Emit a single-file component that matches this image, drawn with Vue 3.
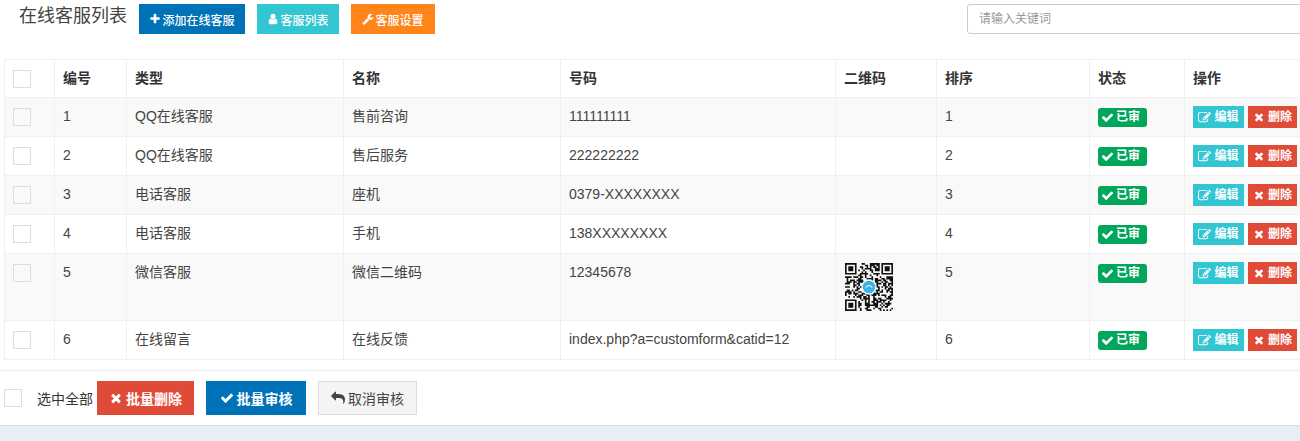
<script setup>
const icons = {
  check: 'M1671 566q0 40-28 68l-724 724-136 136q-28 28-68 28t-68-28l-136-136-362-362q-28-28-28-68t28-68l136-136q28-28 68-28t68 28l294 295 656-657q28-28 68-28t68 28l136 136q28 28 28 68z',
  times: 'M1490 1322q0 40-28 68l-136 136q-28 28-68 28t-68-28l-294-294-294 294q-28 28-68 28t-68-28l-136-136q-28-28-28-68t28-68l294-294-294-294q-28-28-28-68t28-68l136-136q28-28 68-28t68 28l294 294 294-294q28-28 68-28t68 28l136 136q28 28 28 68t-28 68l-294 294 294 294q28 28 28 68z',
  plus: 'M1600 736v192q0 40-28 68t-68 28h-416v416q0 40-28 68t-68 28h-192q-40 0-68-28t-28-68v-416h-416q-40 0-68-28t-28-68v-192q0-40 28-68t68-28h416v-416q0-40 28-68t68-28h192q40 0 68 28t28 68v416h416q40 0 68 28t28 68z',
  user: 'M1536 1399q0 109-62.5 187t-150.5 78h-854q-88 0-150.5-78t-62.5-187q0-85 8.5-160.5t31.5-152 58.5-131 94-89 134.5-34.5q131 128 313 128t313-128q76 0 134.5 34.5t94 89 58.5 131 31.5 152 8.5 160.5zm-256-887q0 159-112.5 271.5t-271.5 112.5-271.5-112.5-112.5-271.5 112.5-271.5 271.5-112.5 271.5 112.5 112.5 271.5z',
  wrench: 'M448 1472q0-26-19-45t-45-19-45 19-19 45 19 45 45 19 45-19 19-45zm644-420l-682 682q-37 37-90 37-52 0-91-37l-106-108q-38-36-38-90 0-53 38-91l681-681q39 98 114.5 173.5t173.5 114.5zm634-435q0 39-23 106-47 134-164.5 217.5t-258.5 83.5q-185 0-316.5-131.5t-131.5-316.5 131.5-316.5 316.5-131.5q58 0 121.5 16.5t107.5 46.5q16 11 16 28t-16 28l-293 169v224l193 107q5-3 79-48.5t135.5-81 70.5-35.5q15 0 23.5 10t8.5 25z',
  edit: 'M888 1184l116-116-152-152-116 116v56h96v96h56zm440-720q-16-16-33 1l-350 350q-17 17-1 33t33-1l350-350q17-17 1-33zm80 594v190q0 119-84.5 203.5t-203.5 84.5h-832q-119 0-203.5-84.5t-84.5-203.5v-832q0-119 84.5-203.5t203.5-84.5h832q63 0 117 25 15 7 18 23 3 17-9 29l-49 49q-14 14-32 8-23-6-45-6h-832q-66 0-113 47t-47 113v832q0 66 47 113t113 47h832q66 0 113-47t47-113v-126q0-13 9-22l64-64q15-15 35-7t20 29zm-96-738l288 288-672 672h-288v-288zm444 132l-92 92-288-288 92-92q28-28 68-28t68 28l152 152q28 28 28 68t-28 68z',
  reply: 'M1792 1120q0 166-127 451-3 7-10.5 24t-13.5 30-13 22q-12 17-28 17-15 0-23.5-10t-8.5-25q0-9 2.5-26.5t2.5-23.5q5-68 5-123 0-101-17.5-181t-48.5-138.5-80-101-105.5-69.5-133-42.5-154-21.5-175.5-6h-224v256q0 26-19 45t-45 19-45-19l-512-512q-19-19-19-45t19-45l512-512q19-19 45-19t45 19 19 45v256h224q713 0 875 403 53 134 53 333z'
}

const rows = [
  { id: 1, type: 'QQ在线客服', name: '售前咨询', num: '111111111', qr: false },
  { id: 2, type: 'QQ在线客服', name: '售后服务', num: '222222222', qr: false },
  { id: 3, type: '电话客服', name: '座机', num: '0379-XXXXXXXX', qr: false },
  { id: 4, type: '电话客服', name: '手机', num: '138XXXXXXXX', qr: false },
  { id: 5, type: '微信客服', name: '微信二维码', num: '12345678', qr: true },
  { id: 6, type: '在线留言', name: '在线反馈', num: 'index.php?a=customform&catid=12', qr: false }
]

const N = 29
function buildQr() {
  let seed = 20771
  const rand = () => {
    seed = (seed * 16807) % 2147483647
    return seed / 2147483647
  }
  let d = ''
  const cell = (x, y) => { d += `M${x} ${y}h1v1h-1z` }
  const inFinder = (x, y, ox, oy) => x >= ox - 1 && x <= ox + 7 && y >= oy - 1 && y <= oy + 7
  const finders = [[0, 0], [N - 7, 0], [0, N - 7]]
  for (let y = 0; y < N; y++) {
    for (let x = 0; x < N; x++) {
      if (finders.some(([a, b]) => inFinder(x, y, a, b))) continue
      if (rand() > 0.5) cell(x, y)
    }
  }
  for (const [a, b] of finders) {
    d += `M${a} ${b}h7v7h-7zM${a + 1} ${b + 1}v5h5v-5zM${a + 2} ${b + 2}h3v3h-3z`
  }
  return d
}
const qrPath = buildQr()
</script>

<template>
  <div class="page">
    <header class="top">
      <h1 class="title">在线客服列表</h1>
      <a class="btn head-btn blue"><svg class="ic" viewBox="0 0 1792 1792"><path :d="icons.plus" /></svg>添加在线客服</a>
      <a class="btn head-btn teal"><svg class="ic" viewBox="0 0 1792 1792"><path :d="icons.user" /></svg>客服列表</a>
      <a class="btn head-btn orange"><svg class="ic" viewBox="0 0 1792 1792"><path :d="icons.wrench" /></svg>客服设置</a>
      <input class="search" type="text" placeholder="请输入关键词" />
    </header>

    <table class="grid">
      <colgroup>
        <col style="width:50px" /><col style="width:72px" /><col style="width:217px" /><col style="width:217px" />
        <col style="width:275px" /><col style="width:101px" /><col style="width:153px" /><col style="width:95px" /><col style="width:130px" />
      </colgroup>
      <thead>
        <tr>
          <th><span class="box cell-box"></span></th>
          <th>编号</th><th>类型</th><th>名称</th><th>号码</th><th>二维码</th><th>排序</th><th>状态</th><th>操作</th>
        </tr>
      </thead>
      <tbody>
        <tr v-for="r in rows" :key="r.id">
          <td><span class="box cell-box"></span></td>
          <td>{{ r.id }}</td>
          <td>{{ r.type }}</td>
          <td>{{ r.name }}</td>
          <td>{{ r.num }}</td>
          <td class="qr-cell">
            <svg v-if="r.qr" class="qr" :viewBox="`0 0 ${N} ${N}`">
              <path fill="#111" fill-rule="evenodd" :d="qrPath" />
              <circle cx="14.5" cy="14.5" r="4.6" fill="#fff" />
              <circle cx="14.5" cy="14.5" r="3.8" fill="#3ab4ea" />
              <path d="M12.6 15a2 2 0 0 1 3.8 0" fill="none" stroke="#fff" stroke-width=".6" />
            </svg>
          </td>
          <td>{{ r.id }}</td>
          <td class="status-cell">
            <span class="badge"><svg class="ic-b" viewBox="0 0 1792 1792"><path :d="icons.check" /></svg>已审</span>
          </td>
          <td class="op-cell">
            <div class="ops">
              <a class="btn mini teal"><svg class="ic" viewBox="0 0 1792 1792"><path :d="icons.edit" /></svg>编辑</a>
              <a class="btn mini red"><svg class="ic" viewBox="0 0 1792 1792"><path :d="icons.times" /></svg>删除</a>
            </div>
          </td>
        </tr>
      </tbody>
    </table>

    <div class="actions">
      <span class="box"></span>
      <span class="all">选中全部</span>
      <a class="btn act red del"><svg class="ic-l" viewBox="0 0 1792 1792"><path :d="icons.times" /></svg>批量删除</a>
      <a class="btn act blue"><svg class="ic-l" viewBox="0 0 1792 1792"><path :d="icons.check" /></svg>批量审核</a>
      <a class="btn act plain"><svg class="ic-l" viewBox="0 0 1792 1792"><path :d="icons.reply" /></svg>取消审核</a>
    </div>

    <div class="strip"></div>
  </div>
</template>

<style>
html, body { margin: 0; background: #fff; overflow: hidden; }
</style>

<style scoped>
.page {
  width: 1300px;
  height: 441px;
  overflow: hidden;
  display: flex;
  flex-direction: column;
  background: #fff;
  color: #333;
  font-family: "Liberation Sans", "Noto Sans CJK SC", sans-serif;
  font-size: 14px;
}
.top {
  height: 59px;
  flex: none;
  box-sizing: border-box;
  padding: 4px 0 0 19px;
  display: flex;
  align-items: flex-start;
  white-space: nowrap;
}
.title {
  flex: none;
  margin: 0 12px 0 0;
  font-size: 18px;
  font-weight: 400;
  line-height: 25px;
  color: #444;
}
.btn {
  display: inline-flex;
  align-items: center;
  justify-content: center;
  box-sizing: border-box;
  color: #fff;
  font-weight: 500;
}
.head-btn {
  flex: none;
  height: 30px;
  font-size: 12px;
  margin-right: 12px;
}
.head-btn:nth-of-type(1) { width: 106px; }
.head-btn:nth-of-type(2) { width: 82px; }
.head-btn:nth-of-type(3) { width: 84px; }
.blue { background: #0072b8; }
.teal { background: #32c5d2; }
.orange { background: #ff851b; }
.red { background: #e04b38; }
.ic { width: 12px; height: 12px; fill: currentColor; flex: none; margin-right: 1px; }
.ic-b { width: 13px; height: 13px; fill: currentColor; flex: none; margin-right: 2px; }
.ic-l { width: 14px; height: 14px; fill: currentColor; flex: none; margin-right: 3px; }
.search {
  box-sizing: border-box;
  width: 340px;
  height: 30px;
  margin-left: 520px;
  flex: none;
  padding: 0 11px;
  border: 1px solid #ccc;
  border-radius: 3px;
  font: 12px "Liberation Sans", "Noto Sans CJK SC", sans-serif;
  background: #fff;
}
.search::placeholder { color: #999; opacity: 1; }
.box {
  display: block;
  flex: none;
  box-sizing: border-box;
  width: 18px;
  height: 18px;
  border: 1px solid #ddd;
  background: transparent;
}
.cell-box { margin-top: 2px; }
.grid {
  margin-left: 4px;
  width: 1310px;
  flex: none;
  table-layout: fixed;
  border-collapse: collapse;
  line-height: 20px;
}
.grid th, .grid td {
  border: 1px solid #f0f0f0;
  padding: 8px 8px 10px;
  text-align: left;
  vertical-align: top;
  white-space: nowrap;
}
.grid th { font-weight: 700; color: #333; padding-bottom: 9px; }
.grid tbody tr:nth-child(odd) td { background: #f9f9f9; }
.grid tbody td { color: #444; }
.grid td.qr-cell { padding: 9px; line-height: 0; }
.qr { display: block; width: 48px; height: 48px; }
.grid td.status-cell { padding: 10px 8px 9px; line-height: 0; }
.badge {
  display: flex;
  align-items: center;
  box-sizing: border-box;
  width: 49px;
  height: 19px;
  padding-left: 3px;
  background: #00a65a;
  color: #fff;
  border-radius: 3px;
  font-size: 12px;
  font-weight: 700;
  line-height: 19px;
}
.grid td.op-cell { padding: 8px; line-height: 0; }
.ops { display: flex; gap: 4px; }
.mini {
  flex: none;
  height: 22px;
  font-size: 12px;
  line-height: 22px;
  font-weight: 700;
}
.mini.teal { width: 51px; }
.mini.red { width: 49px; }
.mini .ic { margin-right: 3px; }
.mini.teal .ic { width: 13px; height: 13px; }
.actions {
  flex: none;
  box-sizing: border-box;
  height: 56px;
  margin-top: 10px;
  border-top: 1px solid #eee;
  border-bottom: 1px solid #ddd;
  display: flex;
  align-items: center;
  padding: 10px 0 10px 4px;
  white-space: nowrap;
}
.all { margin-left: 15px; margin-right: 4px; color: #333; }
.act {
  flex: none;
  height: 34px;
  font-size: 14px;
  font-weight: 700;
  margin-right: 12px;
}
.act.del { width: 97px; }
.act.blue { width: 100px; }
.act.plain {
  width: 99px;
  background: #f4f4f4;
  border: 1px solid #ddd;
  color: #444;
  font-weight: 400;
}
.strip { flex: 1; background: #e9edf5; }
</style>
